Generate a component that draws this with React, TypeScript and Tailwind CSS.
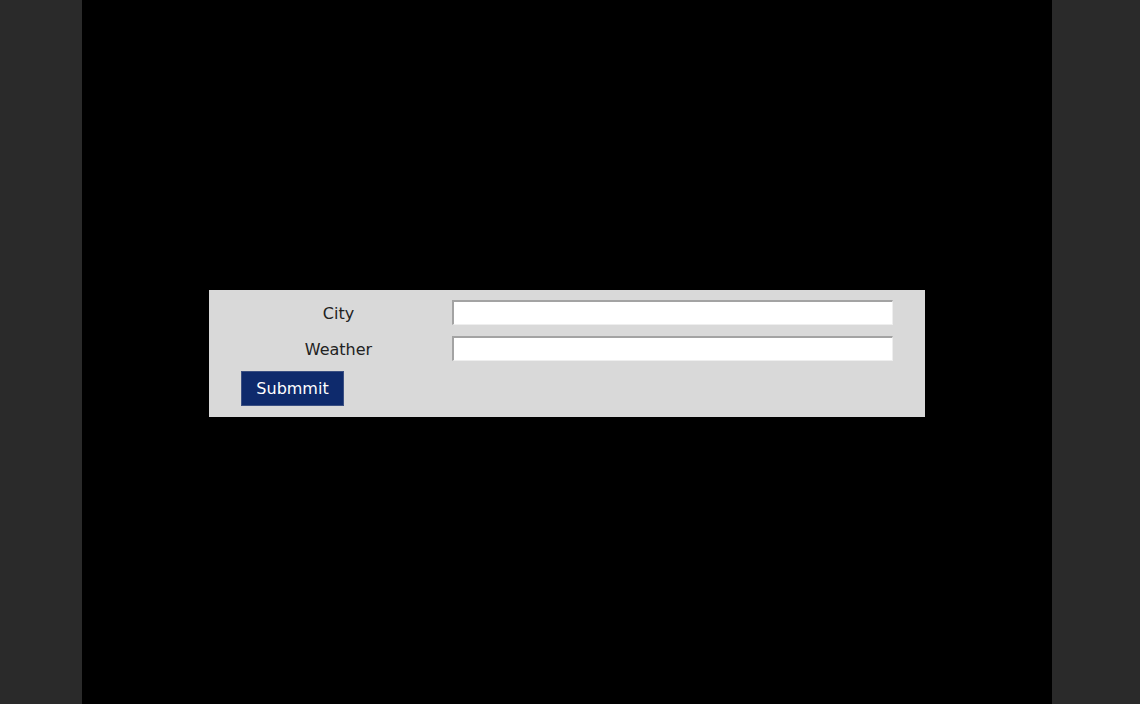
export default function App() {
  return (
    <div className="flex h-[704px] w-full bg-[#2a2a2a]" style={{ fontFamily: '"DejaVu Sans", sans-serif' }}>
      <div className="ml-[82px] flex h-full w-[970px] items-start justify-center bg-black pt-[290px]">
        <div className="w-[716px] bg-[#d9d9d9] px-8 pt-2.5 pb-[11px]">
          <div className="grid grid-cols-[195px_1fr] gap-x-4 gap-y-[11px]">
            <label className="flex h-[25px] items-center justify-center pt-[2px] text-[16px] text-[#222]">City</label>
            <input className="h-[25px] border-t-2 border-l-2 border-r border-b border-t-[#a3a3a3] border-l-[#a3a3a3] border-r-[#eeeeee] border-b-[#eeeeee] bg-white outline-none" />
            <label className="flex h-[25px] items-center justify-center pt-[2px] text-[16px] text-[#222]">Weather</label>
            <input className="h-[25px] border-t-2 border-l-2 border-r border-b border-t-[#a3a3a3] border-l-[#a3a3a3] border-r-[#eeeeee] border-b-[#eeeeee] bg-white outline-none" />
          </div>
          <button className="mt-2.5 h-[35px] w-[103px] border border-[#3a4f82] bg-[#0e2a6c] text-[16px] text-white">
            Submmit
          </button>
        </div>
      </div>
    </div>
  );
}
